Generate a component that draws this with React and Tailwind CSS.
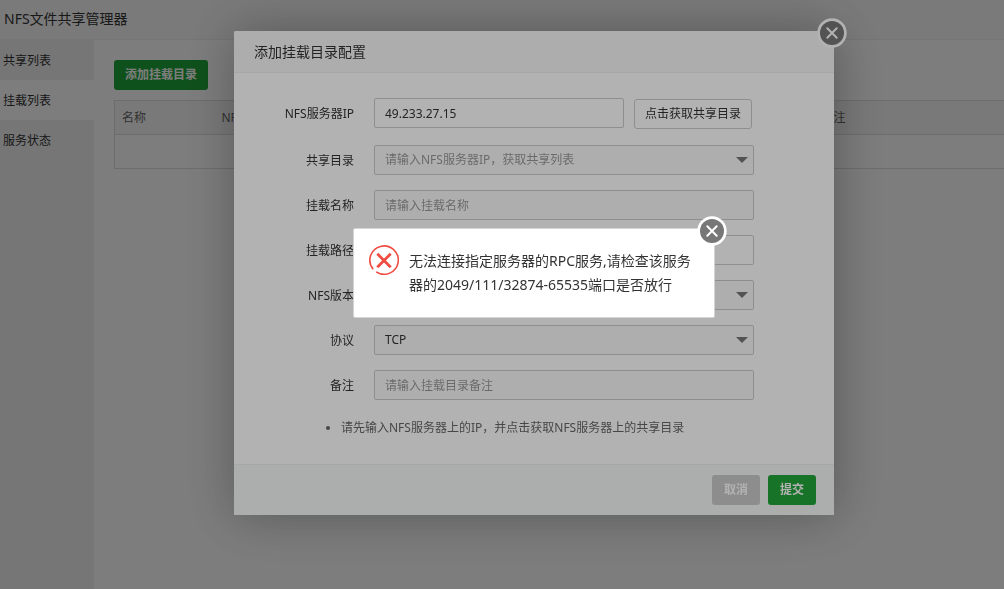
import clsx from "clsx";

const NAV_ITEMS = [
  { label: "共享列表" },
  { label: "挂载列表", active: true },
  { label: "服务状态" },
];

const FIELD_STYLES =
  "h-[30px] rounded-xs border border-[#ccc] px-2.5 text-xs text-[#333] placeholder:text-[#999]";

function CloseButton() {
  return (
    <button
      type="button"
      aria-label="关闭"
      className="absolute -top-[13px] -right-[13px] h-[30px] w-[30px] cursor-pointer"
    >
      <svg viewBox="0 0 30 30" className="h-full w-full">
        <circle cx="15" cy="15" r="14.7" fill="#fff" />
        <circle cx="15" cy="15" r="12" fill="#777" />
        <path
          d="M10.3 10.3 L19.7 19.7 M19.7 10.3 L10.3 19.7"
          stroke="#fff"
          strokeWidth="2"
          strokeLinecap="round"
        />
      </svg>
    </button>
  );
}

function ErrorIcon() {
  return (
    <svg viewBox="0 0 30 30" className="h-[30px] w-[30px] shrink-0" fill="none" stroke="#f04c41">
      <path d="M4.2 24.2 A14.2 14.2 0 1 1 7.2 26.9" strokeWidth="1.6" />
      <path d="M8.3 8.8 L21.7 22.2 M21.7 8.8 L8.3 22.2" strokeWidth="2.8" />
    </svg>
  );
}

function Overlay({ children }) {
  return (
    <div className="fixed inset-0 flex items-center justify-center bg-black/30 pb-[43px] pl-16">
      {children}
    </div>
  );
}

function FormRow({ label, id, children }) {
  return (
    <div className="flex items-start">
      <label htmlFor={id} className="h-[30px] w-[120px] shrink-0 pr-5 text-right leading-8">
        {label}
      </label>
      {children}
    </div>
  );
}

function SelectField({ id, options, placeholder }) {
  return (
    <div className="relative w-[380px]">
      <select
        id={id}
        className={clsx(
          FIELD_STYLES,
          "block w-full appearance-none bg-[#fafafa]",
          placeholder && "text-[#999]",
        )}
      >
        {options.map((option) => (
          <option key={option}>{option}</option>
        ))}
      </select>
      <svg
        viewBox="0 0 12 6"
        className="pointer-events-none absolute top-3 right-1.5 h-1.5 w-3"
        fill="#777"
      >
        <path d="M0 0 H12 L6 6 Z" />
      </svg>
    </div>
  );
}

function MountDialog() {
  return (
    <div
      role="dialog"
      aria-label="添加挂载目录配置"
      className="relative w-[600px] rounded-xs bg-white text-xs text-[#333] shadow-[1px_1px_50px_rgba(0,0,0,0.3)]"
    >
      <h2 className="h-[42px] rounded-t-xs border-b border-[#eee] bg-[#f8f8f8] px-5 text-sm leading-[42px]">
        添加挂载目录配置
      </h2>
      <CloseButton />
      <form>
        <div className="px-5 pt-[25px] pb-6">
          <div className="flex flex-col gap-[15px]">
            <FormRow label="NFS服务器IP" id="server">
              <div className="flex gap-2.5 pb-px">
                <input
                  id="server"
                  defaultValue="49.233.27.15"
                  className={clsx(FIELD_STYLES, "w-[250px]")}
                />
                <button
                  type="button"
                  className="mt-px h-[30px] rounded-[3px] border border-[#ccc] px-2.5"
                >
                  点击获取共享目录
                </button>
              </div>
            </FormRow>
            <FormRow label="共享目录" id="share">
              <SelectField id="share" placeholder options={["请输入NFS服务器IP，获取共享列表"]} />
            </FormRow>
            <FormRow label="挂载名称" id="name">
              <input
                id="name"
                placeholder="请输入挂载名称"
                className={clsx(FIELD_STYLES, "w-[380px] bg-[#fafafa]")}
              />
            </FormRow>
            <FormRow label="挂载路径" id="path">
              <input id="path" className={clsx(FIELD_STYLES, "w-[380px]")} />
            </FormRow>
            <FormRow label="NFS版本" id="version">
              <SelectField id="version" options={["NFSv3", "NFSv4"]} />
            </FormRow>
            <FormRow label="协议" id="protocol">
              <SelectField id="protocol" options={["TCP", "UDP"]} />
            </FormRow>
            <FormRow label="备注" id="remark">
              <input
                id="remark"
                placeholder="请输入挂载目录备注"
                className={clsx(FIELD_STYLES, "w-[380px] bg-[#fafafa]")}
              />
            </FormRow>
          </div>
          <ul className="mt-4 list-disc pl-[87px] leading-6 text-[#666]">
            <li>请先输入NFS服务器上的IP，并点击获取NFS服务器上的共享目录</li>
          </ul>
        </div>
        <div className="flex justify-end gap-2 border-t border-[#edf1f2] bg-[#f6f8f8] py-2.5 pr-[18px] font-bold text-white">
          <button type="button" className="h-[30px] w-12 rounded-[3px] bg-[#cbcbcb]">
            取消
          </button>
          <button type="submit" className="h-[30px] w-12 rounded-[3px] bg-[#20a53a]">
            提交
          </button>
        </div>
      </form>
    </div>
  );
}

function ErrorMessage() {
  return (
    <div
      role="alertdialog"
      aria-label="错误"
      className="relative flex w-[362px] gap-2.5 rounded-xs border border-[#d3d4d3] bg-white py-4 pr-5 pl-[15px] text-sm text-[#333]"
    >
      <ErrorIcon />
      <p className="py-1 leading-6">
        无法连接指定服务器的RPC服务,请检查该服务器的2049/111/32874-65535端口是否放行
      </p>
      <CloseButton />
    </div>
  );
}

export default function App() {
  return (
    <div className="flex min-h-screen flex-col overflow-hidden bg-white font-['Noto_Sans','Noto_Sans_CJK_SC',sans-serif] text-xs text-[#333]">
      <h1 className="h-10 border-b border-[#eee] bg-[#f8f8f8] px-1 text-sm leading-[38px]">
        NFS文件共享管理器
      </h1>
      <div className="flex grow">
        <nav className="w-[94px] shrink-0 bg-[#f0f0f1]">
          {NAV_ITEMS.map((item) => (
            <a
              key={item.label}
              href="#"
              className={clsx("block h-10 px-[3px] leading-[42px]", item.active && "bg-white")}
            >
              {item.label}
            </a>
          ))}
        </nav>
        <main className="grow pt-5 pl-5">
          <button
            type="button"
            className="h-[30px] rounded-[3px] bg-[#20a53a] px-[11px] font-bold text-white"
          >
            添加挂载目录
          </button>
          <table className="mt-2.5 w-full table-fixed border-collapse border-y border-l border-[#ddd] text-left text-[#666]">
            <thead>
              <tr className="h-[34px] border-b border-[#ddd] bg-[#f6f6f6]">
                <th className="w-[100px] px-[7px] font-normal">名称</th>
                <th className="w-[600px] px-[7px] font-normal">NFS服务器IP</th>
                <th className="px-[7px] font-normal">备注</th>
              </tr>
            </thead>
            <tbody>
              <tr className="h-[34px]">
                <td colSpan={3}></td>
              </tr>
            </tbody>
          </table>
        </main>
      </div>
      <Overlay>
        <MountDialog />
      </Overlay>
      <Overlay>
        <ErrorMessage />
      </Overlay>
    </div>
  );
}
